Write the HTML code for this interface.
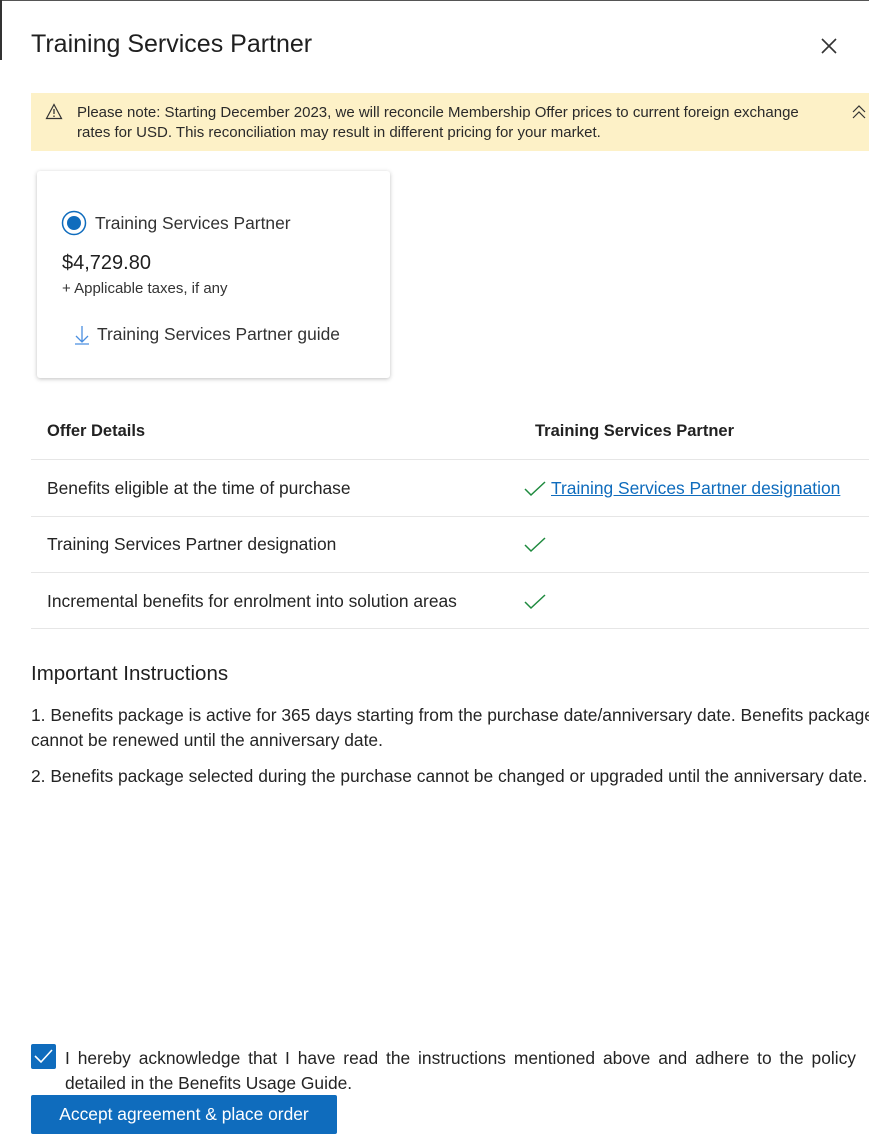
<!DOCTYPE html>
<html><head><meta charset="utf-8"><style>
*{margin:0;padding:0;box-sizing:border-box}
body{width:869px;height:1140px;background:#fff;font-family:"Liberation Sans",sans-serif;color:#242424;position:relative;overflow:hidden}
.a{position:absolute;white-space:nowrap}
.topline{position:absolute;left:0;top:0;width:869px;height:1px;background:#555}
.leftline{position:absolute;left:0;top:0;width:2px;height:60px;background:#333}
.banner{position:absolute;left:31px;top:93px;width:838px;height:58px;background:#fdf1c7}
.card{position:absolute;left:37px;top:171px;width:353px;height:207px;background:#fff;border-radius:3px;box-shadow:0 1px 4px rgba(0,0,0,.25)}
.hr{position:absolute;left:31px;width:838px;height:1px;background:#e6e6e6}
.t16{font-size:17.4px}
</style></head><body>
<div class="topline"></div><div class="leftline"></div>
<div class="a" style="left:31px;top:30px;font-size:25px;color:#1f1f1f">Training Services Partner</div>
<svg class="a" style="left:820px;top:37px" width="18" height="18"><path d="M2 2L16 16M16 2L2 16" stroke="#333" stroke-width="1.6"/></svg>
<div class="banner"></div>
<svg class="a" style="left:45px;top:103px" width="18" height="17"><path d="M9 1.5L16.5 15.5H1.5Z" fill="none" stroke="#333" stroke-width="1.2"/><path d="M9 6V11M9 12.5V14" stroke="#333" stroke-width="1.3"/></svg>
<div class="a" style="left:77px;top:103px;font-size:15px;line-height:20px;color:#2a2a2a">Please note: Starting December 2023, we will reconcile Membership Offer prices to current foreign exchange<br>rates for USD. This reconciliation may result in different pricing for your market.</div>
<svg class="a" style="left:851px;top:104px" width="16" height="16"><path d="M2 8L8 2L14 8M2 14L8 8L14 14" fill="none" stroke="#333" stroke-width="1.2"/></svg>
<div class="card"></div>
<svg class="a" style="left:61px;top:210px" width="26" height="26"><circle cx="13" cy="13" r="11.5" fill="none" stroke="#0f6cbd" stroke-width="1.5"/><circle cx="13" cy="13" r="7" fill="#0f6cbd"/></svg>
<div class="a t16" style="left:95px;top:213px;color:#333">Training Services Partner</div>
<div class="a" style="left:62px;top:252px;font-size:20px;color:#1f1f1f">$4,729.80</div>
<div class="a" style="left:62px;top:280px;font-size:15px;color:#333">+ Applicable taxes, if any</div>
<svg class="a" style="left:74px;top:325px" width="16" height="20"><path d="M8 1V17M2 11L8 17L14 11M1 19H15" fill="none" stroke="#4a8fe0" stroke-width="1.3"/></svg>
<div class="a t16" style="left:97px;top:324px;color:#333">Training Services Partner guide</div>
<div class="a t16" style="left:47px;top:422px;font-weight:bold;color:#222;font-size:16.5px">Offer Details</div>
<div class="a t16" style="left:535px;top:422px;font-weight:bold;color:#222;font-size:16.5px">Training Services Partner</div>
<div class="hr" style="top:459px"></div>
<div class="a t16" style="left:47px;top:478px">Benefits eligible at the time of purchase</div>
<svg class="a" style="left:524px;top:481px" width="22" height="16"><path d="M1 8L7 14L21 1" fill="none" stroke="#1e8a3e" stroke-width="1.5"/></svg>
<div class="a t16" style="left:551px;top:478px;color:#0f6cbd;text-decoration:underline">Training Services Partner designation</div>
<div class="hr" style="top:516px"></div>
<div class="a t16" style="left:47px;top:534px">Training Services Partner designation</div>
<svg class="a" style="left:524px;top:537px" width="22" height="16"><path d="M1 8L7 14L21 1" fill="none" stroke="#1e8a3e" stroke-width="1.5"/></svg>
<div class="hr" style="top:572px"></div>
<div class="a t16" style="left:47px;top:591px">Incremental benefits for enrolment into solution areas</div>
<svg class="a" style="left:524px;top:594px" width="22" height="16"><path d="M1 8L7 14L21 1" fill="none" stroke="#1e8a3e" stroke-width="1.5"/></svg>
<div class="hr" style="top:628px"></div>
<div class="a" style="left:31px;top:662px;font-size:20.5px;color:#1f1f1f">Important Instructions</div>
<div class="a t16" style="left:31px;top:703px;line-height:25px">1. Benefits package is active for 365 days starting from the purchase date/anniversary date. Benefits package<br>cannot be renewed until the anniversary date.</div>
<div class="a t16" style="left:31px;top:766px">2. Benefits package selected during the purchase cannot be changed or upgraded until the anniversary date.</div>
<div class="a" style="left:31px;top:1044px;width:25px;height:25px;background:#0f6cbd;border-radius:2px"></div>
<svg class="a" style="left:34px;top:1048px" width="19" height="16"><path d="M1 8L7 14L18 2" fill="none" stroke="#fff" stroke-width="1.6"/></svg>
<div class="a t16" style="left:65px;top:1046px;line-height:25px;width:791px;text-align:justify;text-align-last:justify">I hereby acknowledge that I have read the instructions mentioned above and adhere to the policy</div>
<div class="a t16" style="left:65px;top:1071px;line-height:25px">detailed in the Benefits Usage Guide.</div>
<div class="a" style="left:31px;top:1095px;width:306px;height:39px;background:#0f6cbd;border-radius:2px;color:#fff;font-size:17.4px;line-height:39px;text-align:center">Accept agreement &amp; place order</div>
</body></html>
